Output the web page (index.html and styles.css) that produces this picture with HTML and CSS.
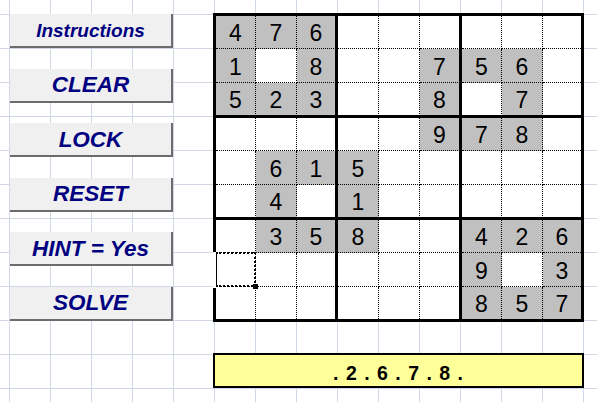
FILE: index.html
```html
<!DOCTYPE html>
<html>
<head>
<meta charset="utf-8">
<link rel="stylesheet" href="styles.css">
</head>
<body>
<div class="sheet">
  <div class="buttons">
    <div class="btn small">Instructions</div>
    <div class="btn">CLEAR</div>
    <div class="btn">LOCK</div>
    <div class="btn">RESET</div>
    <div class="btn">HINT = Yes</div>
    <div class="btn">SOLVE</div>
  </div>
  <div class="main">
    <div class="board">
      <div class="c g">4</div><div class="c g">7</div><div class="c g r3">6</div><div class="c"></div><div class="c"></div><div class="c r3"></div><div class="c"></div><div class="c"></div><div class="c lc"></div>
      <div class="c g">1</div><div class="c"></div><div class="c g r3">8</div><div class="c"></div><div class="c"></div><div class="c g r3">7</div><div class="c g">5</div><div class="c g">6</div><div class="c lc"></div>
      <div class="c g b3">5</div><div class="c g b3">2</div><div class="c g r3 b3">3</div><div class="c b3"></div><div class="c b3"></div><div class="c g r3 b3">8</div><div class="c b3"></div><div class="c g b3">7</div><div class="c lc b3"></div>
      <div class="c"></div><div class="c"></div><div class="c r3"></div><div class="c"></div><div class="c"></div><div class="c g r3">9</div><div class="c g">7</div><div class="c g">8</div><div class="c lc"></div>
      <div class="c"></div><div class="c g">6</div><div class="c g r3">1</div><div class="c g">5</div><div class="c"></div><div class="c r3"></div><div class="c"></div><div class="c"></div><div class="c lc"></div>
      <div class="c b3"></div><div class="c g b3">4</div><div class="c r3 b3"></div><div class="c g b3">1</div><div class="c b3"></div><div class="c r3 b3"></div><div class="c b3"></div><div class="c b3"></div><div class="c lc b3"></div>
      <div class="c"></div><div class="c g">3</div><div class="c g r3">5</div><div class="c g">8</div><div class="c"></div><div class="c r3"></div><div class="c g">4</div><div class="c g">2</div><div class="c g lc">6</div>
      <div class="c sel"><span class="handle"></span></div><div class="c"></div><div class="c r3"></div><div class="c"></div><div class="c"></div><div class="c r3"></div><div class="c g">9</div><div class="c"></div><div class="c g lc">3</div>
      <div class="c lr"></div><div class="c lr"></div><div class="c r3 lr"></div><div class="c lr"></div><div class="c lr"></div><div class="c r3 lr"></div><div class="c g lr">8</div><div class="c g lr">5</div><div class="c g lc lr">7</div>
    </div>
    <div class="result">. 2 . 6 . 7 . 8 .</div>
  </div>
</div>
</body>
</html>
```
FILE: styles.css
```css
html, body {
  margin: 0;
  padding: 0;
  background: #fff;
}
.sheet {
  width: 597px;
  height: 402px;
  overflow: hidden;
  display: flex;
  align-items: flex-start;
  background-color: #fff;
  background-image:
    linear-gradient(to right, #d0d7e5 1px, transparent 1px),
    linear-gradient(to bottom, #d0d7e5 1px, transparent 1px);
  background-size: 41px 34px;
  background-position: 9px 14px;
}
.buttons {
  display: flex;
  flex-direction: column;
  gap: 20.6px;
  margin-left: 10px;
  padding-top: 14px;
  width: 163px;
}
.btn {
  box-sizing: border-box;
  height: 34px;
  background: #f0f0f0;
  border-right: 2px solid #6c6c6c;
  border-bottom: 2px solid #6c6c6c;
  display: flex;
  align-items: center;
  justify-content: center;
  font-family: "Liberation Sans", Arial, sans-serif;
  font-weight: bold;
  font-style: italic;
  font-size: 22.5px;
  color: #000080;
  padding-top: 1px;
}
.btn.small {
  font-size: 19px;
}
.main {
  margin-left: 40px;
  padding-top: 13px;
  display: flex;
  flex-direction: column;
}
.board {
  border: 3px solid #000;
  display: grid;
  grid-template-columns: 40px 41px 41px 41px 41px 42px 40px 41px 38px;
  grid-template-rows: 33px 34px 35px 33px 34px 35px 33px 34px 32px;
  background: #fff;
}
.c {
  box-sizing: border-box;
  background: #fff;
  border-right: 1px dotted #000;
  border-bottom: 1px dotted #000;
  display: flex;
  align-items: center;
  justify-content: center;
  padding-top: 3px;
  font-family: "Liberation Sans", Arial, sans-serif;
  font-size: 23px;
  color: #000;
}
.c.g { background: #c0c0c0; }
.c.r3 { border-right: 3px solid #000; }
.c.b3 { border-bottom: 3px solid #000; }
.c.lc { border-right: none; }
.c.lr { border-bottom: none; }
.c.sel {
  position: relative;
}
.c.sel::before {
  content: "";
  position: absolute;
  left: -3px;
  top: -1px;
  bottom: -2px;
  width: 3px;
  background: #fff;
}
.c.sel::after {
  content: "";
  position: absolute;
  left: 0;
  top: -1px;
  right: -1px;
  bottom: -1px;
  border: 2px dotted #000;
  border-left: 1px solid #000;
}
.handle {
  position: absolute;
  right: -3px;
  bottom: -3px;
  width: 5px;
  height: 5px;
  background: #000;
  z-index: 2;
}
.result {
  margin-top: 31px;
  box-sizing: border-box;
  height: 35px;
  border: 2px solid #000;
  background: #ffff99;
  display: flex;
  align-items: center;
  justify-content: center;
  padding-top: 5px;
  font-family: "Liberation Sans", Arial, sans-serif;
  font-weight: bold;
  font-size: 19.5px;
  letter-spacing: 1px;
  color: #000;
}
```
